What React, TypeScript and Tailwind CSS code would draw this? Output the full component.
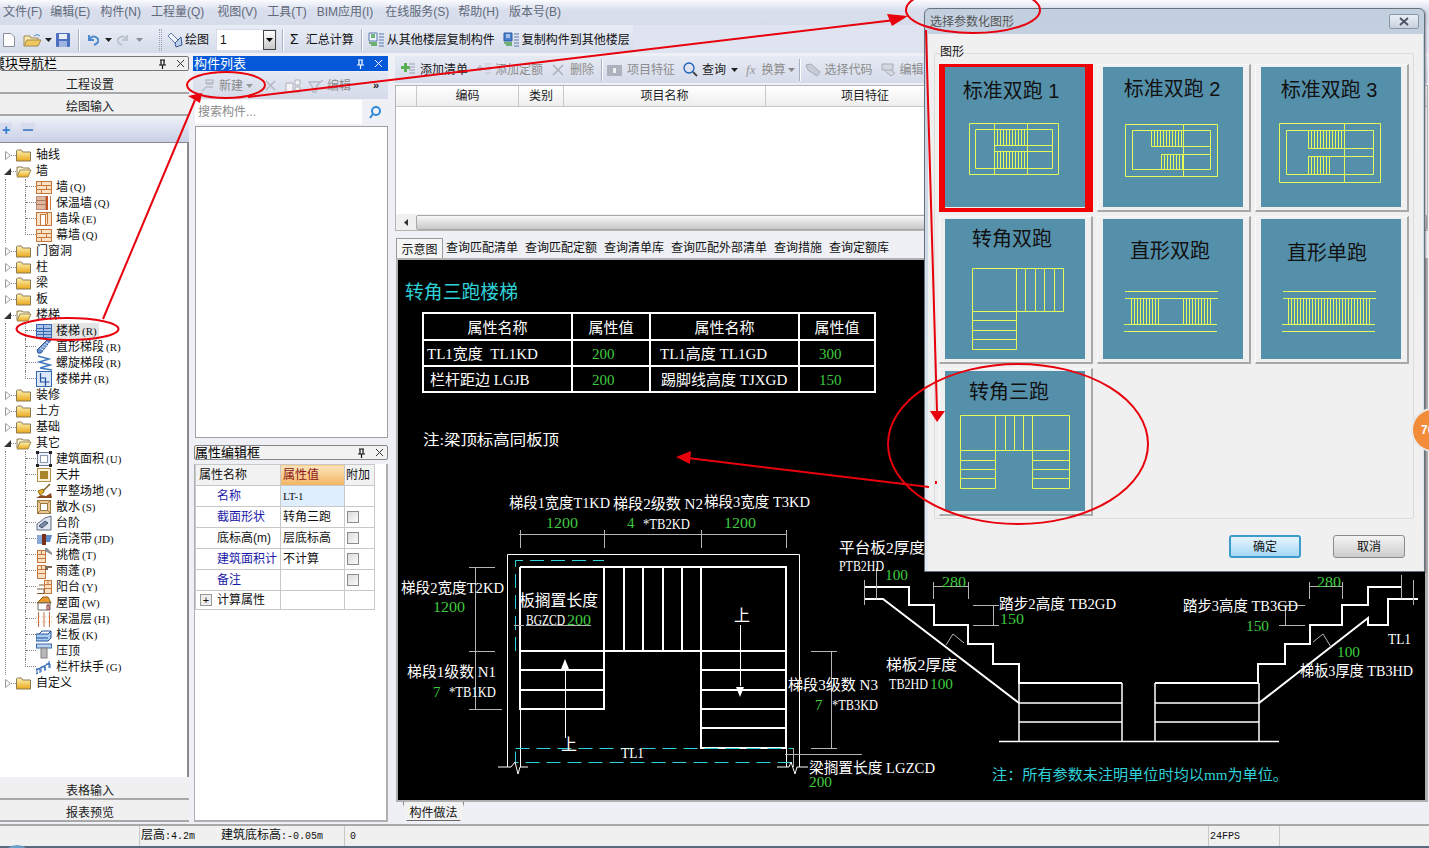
import type { ReactNode } from "react";

const SERIF = "[font-family:'Liberation_Serif','Noto_Sans_CJK_SC',serif]";

const menus = [
  { label: "文件(F)", cls: "mr-[-2px]" },
  { label: "编辑(E)", cls: "" },
  { label: "构件(N)", cls: "" },
  { label: "工程量(Q)", cls: "pr-[3px]" },
  { label: "视图(V)", cls: "" },
  { label: "工具(T)", cls: "" },
  { label: "BIM应用(I)", cls: "pr-[2px]" },
  { label: "在线服务(S)", cls: "mr-[-1px]" },
  { label: "帮助(H)", cls: "" },
  { label: "版本号(B)", cls: "" },
];

type Leaf = { icon: string; name: string; code?: string; active?: boolean };
type Node = { name: string; children?: Leaf[] };

const tree: Node[] = [
  { name: "轴线" },
  {
    name: "墙",
    children: [
      { icon: "brick", name: "墙", code: "Q" },
      { icon: "insul", name: "保温墙", code: "Q" },
      { icon: "pier", name: "墙垛", code: "E" },
      { icon: "brick", name: "幕墙", code: "Q" },
    ],
  },
  { name: "门窗洞" },
  { name: "柱" },
  { name: "梁" },
  { name: "板" },
  {
    name: "楼梯",
    children: [
      { icon: "stair", name: "楼梯", code: "R", active: true },
      { icon: "flight", name: "直形梯段", code: "R" },
      { icon: "spiral", name: "螺旋梯段", code: "R" },
      { icon: "well", name: "楼梯井", code: "R" },
    ],
  },
  { name: "装修" },
  { name: "土方" },
  { name: "基础" },
  {
    name: "其它",
    children: [
      { icon: "area", name: "建筑面积", code: "U" },
      { icon: "patio", name: "天井" },
      { icon: "site", name: "平整场地", code: "V" },
      { icon: "apron", name: "散水", code: "S" },
      { icon: "step", name: "台阶" },
      { icon: "strip", name: "后浇带", code: "JD" },
      { icon: "eave", name: "挑檐", code: "T" },
      { icon: "canopy", name: "雨蓬", code: "P" },
      { icon: "balcony", name: "阳台", code: "Y" },
      { icon: "roof", name: "屋面", code: "W" },
      { icon: "layer", name: "保温层", code: "H" },
      { icon: "parapet", name: "栏板", code: "K" },
      { icon: "coping", name: "压顶" },
      { icon: "rail", name: "栏杆扶手", code: "G" },
    ],
  },
  { name: "自定义" },
];

function Svg({ w = 16, h = 16, vb, children }: { w?: number; h?: number; vb?: string; children: ReactNode }) {
  return (
    <svg width={w} height={h} viewBox={vb ?? `0 0 ${w} ${h}`} className="shrink-0" fill="none">
      {children}
    </svg>
  );
}

function LeafIcon({ kind }: { kind: string }) {
  const brick = "#c8763a";
  const blue = "#3a68b0";
  switch (kind) {
    case "brick":
      return (
        <Svg>
          <rect x="0.5" y="2.5" width="15" height="12" fill="#fbe2c4" stroke={brick} />
          <path d="M0 6.5h16M0 10.5h16M5.5 2.5v4M10.5 6.5v4M5.5 10.5v4" stroke={brick} />
        </Svg>
      );
    case "insul":
      return (
        <Svg>
          <rect x="0.5" y="1.5" width="9" height="13" fill="#e2b8a0" stroke="#b89080" />
          <rect x="10" y="1" width="2" height="14" fill="#c8501e" />
          <path d="M0 5.5h9M0 9.5h9" stroke="#a87860" />
          <path d="M14.5 1v14" stroke="#c8763a" />
        </Svg>
      );
    case "pier":
      return (
        <Svg>
          <rect x="0.5" y="1.5" width="15" height="13" fill="#fbe2c4" stroke={brick} />
          <rect x="4.5" y="3.5" width="5" height="11" fill="#fff" stroke={brick} />
          <path d="M9.5 3.5l2-2v11l-2 2" stroke={brick} />
        </Svg>
      );
    case "stair":
      return (
        <Svg>
          <rect x="0.5" y="1.5" width="15" height="13" fill="#a9c2ea" stroke={blue} />
          <path d="M0 5.5h16M0 8.5h16M0 11.5h16M7.5 1.5v13" stroke={blue} />
        </Svg>
      );
    case "flight":
      return (
        <Svg>
          <path d="M1 11L11 1h4L5 14H2z" fill="#6c94d0" stroke="#23508f" />
          <path d="M4 9l5 3M6 7l5 3M8 5l4 3M10 3l3 2" stroke="#dfe9f8" />
        </Svg>
      );
    case "spiral":
      return (
        <Svg>
          <path d="M2 1l11 3-10 3 11 3-10 3 12 2" stroke="#3c78c0" strokeWidth="1.4" />
        </Svg>
      );
    case "well":
      return (
        <Svg>
          <rect x="0.5" y="0.5" width="15" height="15" fill="#dbe7f8" stroke={blue} />
          <path d="M4.5 2v9h9M4.5 7h5v7M9.5 11v4" stroke="#1f4f96" strokeWidth="1.2" />
        </Svg>
      );
    case "area":
      return (
        <Svg>
          <rect x="1.5" y="1.5" width="13" height="13" fill="#eef2f8" stroke="#6a7b90" />
          <rect x="4.5" y="4.5" width="7" height="7" fill="#fff" stroke="#8a9ab0" />
          <path d="M0 0h3v3H0zM13 0h3v3h-3zM0 13h3v3H0zM13 13h3v3h-3z" fill="#222" />
        </Svg>
      );
    case "patio":
      return (
        <Svg>
          <rect x="1.5" y="1.5" width="13" height="13" fill="#fbf4dc" stroke="#b89050" />
          <rect x="4" y="4" width="8" height="8" fill="#a8842a" />
        </Svg>
      );
    case "site":
      return (
        <Svg>
          <path d="M14 1L7 8" stroke="#7a5a20" strokeWidth="1.4" />
          <path d="M2 8l5-2 1 3-4 3z" fill="#e8b020" stroke="#8a6a10" />
          <path d="M0 15l5-3 5 1 5-3 1 5z" fill="#8a4a20" />
        </Svg>
      );
    case "apron":
      return (
        <Svg>
          <rect x="1.5" y="1.5" width="13" height="13" fill="#e8c898" stroke="#9c7a40" />
          <rect x="4.5" y="4.5" width="7" height="7" fill="#fff" stroke="#9c7a40" />
          <path d="M1.5 1.5l3 3M14.5 1.5l-3 3M1.5 14.5l3-3M14.5 14.5l-3-3" stroke="#9c7a40" />
        </Svg>
      );
    case "step":
      return (
        <Svg>
          <path d="M1 15V9l8-6 6-2v14z" fill="#dfe6f0" stroke="#5c6a80" />
          <path d="M3 11l6-5 3 2-6 5z" fill="#7a8ca8" stroke="#44536a" />
        </Svg>
      );
    case "strip":
      return (
        <Svg>
          <path d="M1 4h5v9H1z" fill="#8aa8d8" />
          <path d="M6 3h4v11H6z" fill="#7a3018" />
          <path d="M10 4h6l-2 7h-4z" fill="#5c88c8" />
        </Svg>
      );
    case "eave":
      return (
        <Svg>
          <rect x="1.5" y="3.5" width="8" height="12" fill="#fbe2c4" stroke={brick} />
          <path d="M1 7.5h8M1 11.5h8M5.5 3.5v4" stroke={brick} />
          <path d="M9 1h2l5 5v2l-7-4z" fill="#8a9098" />
        </Svg>
      );
    case "canopy":
      return (
        <Svg>
          <rect x="1.5" y="2.5" width="8" height="13" fill="#fbe2c4" stroke={brick} />
          <path d="M1 6.5h8M1 10.5h8M5.5 2.5v4" stroke={brick} />
          <path d="M9 3h7v2H12v2H9z" fill="#7a6a5a" />
        </Svg>
      );
    case "balcony":
      return (
        <Svg>
          <rect x="8.5" y="1.5" width="7" height="13" fill="#fbe2c4" stroke={brick} />
          <path d="M8 5.5h7M8 9.5h7M12 1.5v4" stroke={brick} />
          <path d="M1 10h7v4.5H1M3 6h5" stroke="#7a5a3a" />
        </Svg>
      );
    case "roof":
      return (
        <Svg>
          <path d="M1 8l6-6h5l3 6z" fill="#e89a30" stroke="#8a5a10" />
          <path d="M2 8h12v7H2z" fill="#fff" stroke="#6a6a6a" />
          <path d="M11 15v-5h2v5" stroke="#8a1a1a" />
        </Svg>
      );
    case "layer":
      return (
        <Svg>
          <path d="M2.5 1v15M8 1v15M13.5 1v15" stroke="#c87040" />
          <path d="M0 6h16M0 11h16" stroke="#e8b890" strokeDasharray="1 2" />
        </Svg>
      );
    case "parapet":
      return (
        <Svg>
          <path d="M0 7h12l3-3v7l-3 3H0z" fill="#a8cdf0" stroke="#1f4f96" />
          <path d="M3 7l3-3h9" stroke="#1f4f96" />
          <path d="M0 11h12" stroke="#1f4f96" />
        </Svg>
      );
    case "coping":
      return (
        <Svg>
          <rect x="0.5" y="1" width="15" height="4" fill="#bcd4f0" stroke={blue} />
          <rect x="5" y="5" width="6" height="10" fill="#b8b8b8" stroke="#808080" />
        </Svg>
      );
    default:
      return (
        <Svg>
          <path d="M0 11l14-7M1 15v-5M5 13V8M9 11V6M13 9V2M0 15l2-1" stroke="#2a62b4" />
          <path d="M0 10h4v4M5 8h4v4M10 5h4v4" stroke="#2a62b4" />
        </Svg>
      );
  }
}

function Folder({ open }: { open?: boolean }) {
  return (
    <Svg w={16} h={13}>
      <defs>
        <linearGradient id="folderFill" x1="0" y1="0" x2="0" y2="1">
          <stop offset="0" stopColor="#fff3b8" />
          <stop offset="1" stopColor="#e8a818" />
        </linearGradient>
      </defs>
      {open ? (
        <>
          <path d="M1 11V2h5l1 1h6v2" stroke="#8a7a50" fill="#fdf3d0" />
          <path d="M1 12l3-7h11l-3 7z" fill="url(#folderFill)" stroke="#a08a50" />
        </>
      ) : (
        <>
          <path d="M0.5 12V2l1-1h4l1 2h8v9z" fill="url(#folderFill)" stroke="#8a7a50" />
        </>
      )}
    </Svg>
  );
}

function Pin({ dark = true }: { dark?: boolean }) {
  return (
    <Svg w={9} h={10}>
      <path d="M2 1h5M3 1v5M6 1v5M1 6h7M4.5 6v4" stroke={dark ? "#111" : "#fff"} strokeWidth="1.2" />
    </Svg>
  );
}

function CloseX({ dark = true }: { dark?: boolean }) {
  return (
    <Svg w={9} h={9}>
      <path d="M1 1l7 7M8 1L1 8" stroke={dark ? "#333" : "#fff"} />
    </Svg>
  );
}

function Caret({ color = "#222" }: { color?: string }) {
  return (
    <Svg w={7} h={4}>
      <path d="M0 0h7L3.5 4z" fill={color} />
    </Svg>
  );
}

function Sep() {
  return <div className="mx-[3px] h-[22px] w-[2px] shrink-0 border-r border-l border-r-white border-l-[#a8b0c4]" />;
}

function TreeRows() {
  return (
    <div className="pt-[4px] text-[12px] leading-[16px] text-[#111]">
      {tree.map((node) => (
        <div key={node.name}>
          <div className="flex h-[16px] items-center">
            <div className="flex w-[11px] justify-end">
              {node.children ? (
                <Svg w={7} h={7}>
                  <path d="M7 0v7H0z" fill="#333" />
                </Svg>
              ) : (
                <Svg w={6} h={9}>
                  <path d="M0.5 0.5v8l5-4z" stroke="#9a9a9a" fill="#fff" />
                </Svg>
              )}
            </div>
            <div className="w-[5px] border-b border-dotted border-[#888]" />
            <Folder open={!!node.children} />
            <span className="ml-[4px]">{node.name}</span>
          </div>
          {node.children && (
            <div className="ml-[5px] border-l border-dotted border-[#888] pl-[19px]">
              {node.children.map((leaf, i) => (
                <div key={leaf.name + i} className="flex h-[16px] items-center">
                  <div
                    className={
                      i === node.children!.length - 1
                        ? "mb-[8px] h-[8px] w-[11px] border-b border-l border-dotted border-[#888]"
                        : "relative h-[16px] w-[11px] border-l border-dotted border-[#888]"
                    }
                  >
                    {i !== node.children!.length - 1 && <div className="h-[8px] border-b border-dotted border-[#888]" />}
                  </div>
                  <LeafIcon kind={leaf.icon} />
                  <span
                    className={
                      leaf.active
                        ? "flex h-[16px] items-center rounded-[1px] bg-[#e4e4e4] pr-[2px] pl-[4px]"
                        : "ml-[4px] flex items-center"
                    }
                  >
                    {leaf.name}
                    {leaf.code && <span className={`ml-[2px] text-[11px] ${SERIF}`}>({leaf.code})</span>}
                  </span>
                </div>
              ))}
            </div>
          )}
        </div>
      ))}
    </div>
  );
}

function NavButton({ label }: { label: string }) {
  return (
    <div className="flex h-[21px] shrink-0 items-center justify-center border-b-2 border-[#a8a8a8] bg-[#f0f0f0] pt-[4px] pr-[9px] text-[12px] text-[#222]">
      {label}
    </div>
  );
}

function LeftPanel() {
  return (
    <div className="flex w-[189px] shrink-0 flex-col pb-[2px]">
      <div className="mt-[3px] flex h-[15px] items-center overflow-hidden rounded-[2px] border border-[#777] bg-[#f0f0f0] pr-[3px] text-[13px] text-black">
        <span className="ml-[-9px] flex-1">模块导航栏</span>
        <Pin />
        <span className="w-[9px]" />
        <CloseX />
      </div>
      <div className="mt-[2px]">
        <NavButton label="工程设置" />
      </div>
      <div className="mt-[1px]">
        <NavButton label="绘图输入" />
      </div>
      <div className="mt-[1px] flex h-[26px] shrink-0 items-center gap-[9px] border-b border-[#8a8a8a] bg-linear-to-b from-[#eef0f8] to-[#c9d0e6]">
        <div className="flex h-[14px] w-[12px] items-center justify-center bg-[#d6dcee] text-[14px] font-bold leading-none text-[#2f7fd0]">+</div>
        <div className="flex h-[14px] w-[14px] items-center justify-center bg-[#d6dcee]">
          <div className="h-[2px] w-[10px] bg-[#5a8ac8]" />
        </div>
      </div>
      <div className="min-h-0 flex-1 border-r-2 border-[#8a8a8a] bg-white">
        <TreeRows />
      </div>
      <div className="mt-[2px]">
        <NavButton label="表格输入" />
      </div>
      <div className="mt-[1px]">
        <NavButton label="报表预览" />
      </div>
    </div>
  );
}

const propRows = [
  { name: "名称", blue: true, value: "LT-1", check: false, sel: true },
  { name: "截面形状", blue: true, value: "转角三跑", check: true },
  { name: "底标高(m)", blue: false, value: "层底标高", check: true },
  { name: "建筑面积计", blue: true, value: "不计算", check: true },
  { name: "备注", blue: true, value: "", check: true },
];

function PropTable() {
  return (
    <table className="w-[180px] table-fixed border-collapse text-[12px] text-[#111]">
      <tbody>
        <tr className="h-[21px]">
          <td className="w-[85px] border border-[#c8c8c8] bg-[#f2f2f2] pl-[3px]">属性名称</td>
          <td className="w-[64px] border border-[#c8c8c8] bg-linear-to-b from-[#fce4bc] to-[#f2b45e] pl-[2px] text-[#8a1616]">属性值</td>
          <td className="border border-[#c8c8c8] bg-[#f2f2f2] pl-[1px]">附加</td>
        </tr>
        {propRows.map((r) => (
          <tr key={r.name} className="h-[21px]">
            <td className={r.blue ? "border border-[#c8c8c8] pl-[21px] text-[#1a1aa8]" : "border border-[#c8c8c8] pl-[21px]"}>{r.name}</td>
            <td className={r.sel ? `border border-[#c8c8c8] bg-[#dfeefd] pl-[2px] text-[11px] ${SERIF}` : "border border-[#c8c8c8] pl-[2px]"}>{r.value}</td>
            <td className="border border-[#c8c8c8]">
              {r.check && <div className="ml-[2px] h-[12px] w-[12px] border border-[#8c8c8c] bg-linear-to-br from-[#dcdcdc] to-[#fafafa]" />}
            </td>
          </tr>
        ))}
        <tr className="h-[19px]">
          <td className="border border-[#c8c8c8] pl-[4px]">
            <span className="flex items-center gap-[5px]">
              <span className="flex h-[12px] w-[12px] items-center justify-center border border-[#999] bg-[#eee] text-[11px] leading-none">+</span>
              计算属性
            </span>
          </td>
          <td className="border border-[#c8c8c8]" />
          <td className="border border-[#c8c8c8]" />
        </tr>
      </tbody>
    </table>
  );
}

function MiddlePanel() {
  return (
    <div className="ml-[4px] flex w-[195px] shrink-0 flex-col pb-[2px]">
      <div className="mt-[3px] flex h-[15px] items-center bg-[#0558d8] pr-[5px] text-[13px] text-white">
        <span className="flex-1 pl-[1px]">构件列表</span>
        <Pin dark={false} />
        <span className="w-[9px]" />
        <CloseX dark={false} />
      </div>
      <div className="mt-[1px] flex h-[27px] items-center bg-linear-to-b from-[#e4e8f3] to-[#d4dae9] pl-[7px] text-[12px] text-[#8a8a8a]">
        <Svg w={15} h={15}>
          <path d="M2 13l4-4M6 2h7v3H6zM6 6h7M6 9h7" stroke="#b8bcc6" strokeWidth="1.4" />
        </Svg>
        <span className="ml-[4px]">新建</span>
        <span className="ml-[3px]">
          <Caret color="#999" />
        </span>
        <span className="ml-[12px]">
          <Svg w={11} h={11}>
            <path d="M1 1l9 9M10 1l-9 9" stroke="#b0b4be" strokeWidth="1.3" />
          </Svg>
        </span>
        <span className="ml-[9px]">
          <Svg w={16} h={14}>
            <path d="M1 4h7v9H1zM10 1h5v5h-5zM10 8h5v5h-5z" fill="#f4f4f6" stroke="#aeb2bc" />
          </Svg>
        </span>
        <span className="ml-[7px]">
          <Svg w={16} h={14}>
            <path d="M1 3h11L8 9v4H5V9zM8 7l7-6" stroke="#b4b8c2" strokeWidth="1.3" />
          </Svg>
        </span>
        <span className="ml-[3px]">编辑</span>
        <span className="ml-[22px] text-[11px] font-bold text-[#222]">»</span>
      </div>
      <div className="flex h-[25px] items-center bg-[#eef0f5] pl-[2px]">
        <div className="flex h-[24px] w-[167px] items-center bg-white pl-[3px] text-[12px] text-[#8a8a8a]">搜索构件...</div>
        <span className="ml-[6px]">
          <Svg w={14} h={14}>
            <circle cx="8" cy="6" r="4" stroke="#2f88d8" strokeWidth="2" />
            <path d="M5 9l-3 4" stroke="#2f88d8" strokeWidth="2" />
          </Svg>
        </span>
      </div>
      <div className="mt-[2px] ml-[2px] h-[312px] border border-[#a0a0a0] bg-white" />
      <div className="mt-[7px] ml-[1px] flex h-[15px] items-center rounded-[2px] border border-[#888] bg-[#f2f2f2] pr-[3px] text-[13px] text-black">
        <span className="flex-1">属性编辑框</span>
        <Pin />
        <span className="w-[9px]" />
        <CloseX />
      </div>
      <div className="mt-[4px] ml-[1px] flex-1 border-r-2 border-b-2 border-l border-[#b0b0b0] bg-white">
        <PropTable />
      </div>
    </div>
  );
}

function ToolText({ children, off }: { children: ReactNode; off?: boolean }) {
  return <span className={off ? "text-[#8c8c8c]" : "text-[#1a1a1a]"}>{children}</span>;
}

function RightToolbar() {
  return (
    <div className="mt-[3px] flex h-[27px] items-center bg-linear-to-b from-[#e6eaf4] to-[#d5dbea] pl-[5px] text-[12px] whitespace-nowrap">
      <Svg>
        <path d="M1 4h3V1h3v3h3v3H7v3H4V7H1z" fill="#58b050" />
        <path d="M9 2h6M9 5h6M9 8h6M9 11h6" stroke="#9aa0ac" />
      </Svg>
      <span className="ml-[4px]">
        <ToolText>添加清单</ToolText>
      </span>
      <span className="ml-[8px]">
        <Svg>
          <path d="M1 6h6M4 3v6" stroke="#b8bcc4" strokeWidth="2" />
          <path d="M9 2h6M9 5h6M9 8h6M9 11h6" stroke="#c0c4cc" />
        </Svg>
      </span>
      <span className="ml-[3px]">
        <ToolText off>添加定额</ToolText>
      </span>
      <span className="ml-[9px]">
        <Svg w={12} h={12}>
          <path d="M1 1l10 10M11 1L1 11" stroke="#a8acb6" strokeWidth="1.4" />
        </Svg>
      </span>
      <span className="ml-[6px]">
        <ToolText off>删除</ToolText>
      </span>
      <span className="ml-[4px]">
        <Sep />
      </span>
      <span className="ml-[1px]">
        <Svg w={16} h={14}>
          <rect y="2" width="15" height="11" fill="#aeb2bc" />
          <path d="M6 5h3v5H6z" fill="#eef0f4" />
        </Svg>
      </span>
      <span className="ml-[4px]">
        <ToolText off>项目特征</ToolText>
      </span>
      <span className="ml-[8px]">
        <Svg w={15} h={15}>
          <circle cx="6" cy="6" r="5" stroke="#1a5fb8" strokeWidth="1.3" />
          <path d="M10 10l4 4" stroke="#444" strokeWidth="1.8" />
        </Svg>
      </span>
      <span className="ml-[4px]">
        <ToolText>查询</ToolText>
      </span>
      <span className="ml-[5px]">
        <Caret />
      </span>
      <span className="ml-[8px] text-[13px] text-[#999] italic [font-family:'Liberation_Serif',serif]">fx</span>
      <span className="ml-[6px]">
        <ToolText off>换算</ToolText>
      </span>
      <span className="ml-[3px]">
        <Caret color="#888" />
      </span>
      <span className="ml-[1px]">
        <Sep />
      </span>
      <span className="ml-[1px]">
        <Svg>
          <path d="M1 3l5-1 9 8-3 4-9-6z" fill="#c8ccd4" stroke="#a6aab4" />
        </Svg>
      </span>
      <span className="ml-[3px]">
        <ToolText off>选择代码</ToolText>
      </span>
      <span className="ml-[8px]">
        <Svg>
          <path d="M1 2h11v6H1zM3 8l7 6 4-3-4-3" fill="#d4d8e0" stroke="#a8acb6" />
        </Svg>
      </span>
      <span className="ml-[3px]">
        <ToolText off>编辑</ToolText>
      </span>
    </div>
  );
}

function T({ x, y, w, s = 15, c = "#fff", children }: { x: number; y: number; w?: number; s?: number; c?: string; children: string }) {
  return (
    <text x={x} y={y + 1} fontSize={s} fill={c} dominantBaseline="central" textLength={w} lengthAdjust={w ? "spacingAndGlyphs" : undefined}>
      {children}
    </text>
  );
}

const GREEN = "#3fcb3f";
const CYAN = "#2fd2d8";

function StairDrawing() {
  return (
    <svg width="1027" height="540" viewBox="398 260 1027 540" className={`block ${SERIF}`} fill="none">
      {/* plan: walls */}
      <path d="M507.5 767V554.5H799.5V767" stroke="#fff" />
      <path d="M520.5 709V767M786.5 748V767" stroke="#fff" />
      <g stroke="#fff" strokeWidth="2">
        <path d="M520 567H786V748H701V651H604V709H520V567M520 651H786M604 567V651M701 567V651" />
        <path d="M624 567V651M643 567V651M663 567V651M682 567V651" />
        <path d="M520 670H604M520 690H604M701 670H786M701 690H786M701 709H786M701 728H786" />
      </g>
      <path d="M515.5 651V560.5H604" stroke={CYAN} strokeDasharray="14 7" />
      <path d="M515.5 748.5H793.5V762.5H515.5Z" stroke={CYAN} strokeDasharray="14 7" />
      {/* plan: arrows */}
      <path d="M565.5 668V738M740.5 625V686" stroke="#fff" />
      <path d="M565 659l-4 10h8zM740 697l-4-10h8z" fill="#fff" />
      <path d="M498 767H511L515 762L518 774L520 767H528M777 767H789L791 762L795 774L797 767H808" stroke="#fff" />
      {/* plan: dimensions */}
      <g stroke="#b4b4b4">
        <path d="M519 534.5H787M520.5 530V548M604.5 530V548M701.5 530V548M786.5 530V548" />
        <path d="M475.5 567V709M469 567.5H495M469 651.5H495M469 709.5H502" />
        <path d="M831.5 651V748M811 651.5H837M811 748.5H837" />
        <path d="M785 754.5H862M793.5 748V767" />
        <path d="M526 625.5H591M514 625.5H524" />
      </g>
      {/* section */}
      <g stroke="#fff" strokeWidth="2">
        <path d="M864 587H909V605H934V625H968V644H993V664H1019V683H1122" />
        <path d="M864 599H883L1019 703" />
        <path d="M1155 683H1258V664H1285V644H1310V625H1342V605H1368V587H1401" />
        <path d="M1259 703L1368 618V625H1388V599H1418" />
      </g>
      <g stroke="#fff" strokeWidth="1.5">
        <path d="M1019 683V741M1122 683V741M1019 703H1122M1019 722H1122M1155 683V741M1259 683V741M1155 703H1259M1155 722H1259M999 741.5H1279" />
      </g>
      <g stroke="#b4b4b4">
        <path d="M933 586.5H968M933.5 582V599M968.5 582V599M1309 586.5H1342M1309.5 582V599M1342.5 582V599" />
        <path d="M973 605.5H999M973 625.5H999M993.5 605V625M1279 605.5H1305M1279 625.5H1305M1285.5 605V625" />
        <path d="M946 645L953 634L964 643M1313 642L1323 634L1331 647" />
        <path d="M876.5 568V599M864.5 580V605M1401.5 575V599M1413.5 580V605" />
      </g>
      {/* labels */}
      <T x={405} y={291} s={19} c={CYAN} w={113}>转角三跑楼梯</T>
      <T x={423} y={439} s={15} w={136}>注:梁顶标高同板顶</T>
      <T x={509} y={502} w={101}>梯段1宽度T1KD</T>
      <T x={613} y={503} w={90}>梯段2级数 N2</T>
      <T x={704} y={501} w={106}>梯段3宽度 T3KD</T>
      <T x={546} y={522} c={GREEN} w={32}>1200</T>
      <T x={627} y={522} c={GREEN}>4</T>
      <T x={643} y={523} w={47}>*TB2KD</T>
      <T x={724} y={522} c={GREEN} w={32}>1200</T>
      <T x={401} y={587} w={103}>梯段2宽度T2KD</T>
      <T x={433} y={606} c={GREEN} w={32}>1200</T>
      <T x={519} y={599} s={16} w={79}>板搁置长度</T>
      <T x={526} y={619} w={39}>BGZCD</T>
      <T x={567} y={619} c={GREEN} w={24}>200</T>
      <T x={407} y={671} w={89}>梯段1级数 N1</T>
      <T x={433} y={691} c={GREEN}>7</T>
      <T x={449} y={691} w={47}>*TB1KD</T>
      <T x={788} y={684} w={90}>梯段3级数 N3</T>
      <T x={815} y={704} c={GREEN}>7</T>
      <T x={832} y={704} w={46}>*TB3KD</T>
      <T x={561} y={743} s={16}>上</T>
      <T x={734} y={614} s={16}>上</T>
      <T x={621} y={752} w={23}>TL1</T>
      <T x={809} y={767} w={126}>梁搁置长度 LGZCD</T>
      <T x={809} y={781} c={GREEN} w={23}>200</T>
      <T x={839} y={547} w={86}>平台板2厚度</T>
      <T x={839} y={565} w={45}>PTB2HD</T>
      <T x={885} y={574} c={GREEN} w={23}>100</T>
      <T x={942} y={581} c={GREEN} w={24}>280</T>
      <T x={1317} y={581} c={GREEN} w={24}>280</T>
      <T x={999} y={603} w={117}>踏步2高度 TB2GD</T>
      <T x={1000} y={618} c={GREEN} w={24}>150</T>
      <T x={1183} y={605} w={115}>踏步3高度 TB3GD</T>
      <T x={1246} y={625} c={GREEN} w={23}>150</T>
      <T x={886} y={664} w={71}>梯板2厚度</T>
      <T x={889} y={683} w={39}>TB2HD</T>
      <T x={930} y={683} c={GREEN} w={23}>100</T>
      <T x={1388} y={638} w={23}>TL1</T>
      <T x={1337} y={651} c={GREEN} w={23}>100</T>
      <T x={1300} y={670} w={113}>梯板3厚度 TB3HD</T>
      <T x={992} y={774} c={CYAN} w={296}>注：所有参数未注明单位时均以mm为单位。</T>
    </svg>
  );
}

function CanvasTable() {
  const cell = "border-2 border-white pt-[2px]";
  const num = `${cell} pl-[19px] text-[#3fcb3f]`;
  return (
    <table className={`absolute top-[52px] left-[24px] w-[454px] table-fixed border-collapse text-[15px] leading-[18px] text-white ${SERIF}`}>
      <tbody>
        <tr className="h-[27px]">
          <td className={`${cell} w-[149px] text-center`}>属性名称</td>
          <td className={`${cell} w-[78px] text-center`}>属性值</td>
          <td className={`${cell} w-[149px] text-center`}>属性名称</td>
          <td className={`${cell} text-center`}>属性值</td>
        </tr>
        <tr className="h-[26px]">
          <td className={`${cell} pl-[3px] whitespace-nowrap`}>TL1宽度&nbsp;&nbsp;TL1KD</td>
          <td className={num}>200</td>
          <td className={`${cell} pl-[9px] whitespace-nowrap`}>TL1高度 TL1GD</td>
          <td className={num}>300</td>
        </tr>
        <tr className="h-[26px]">
          <td className={`${cell} pl-[6px] whitespace-nowrap`}>栏杆距边 LGJB</td>
          <td className={num}>200</td>
          <td className={`${cell} pl-[10px] whitespace-nowrap`}>踢脚线高度 TJXGD</td>
          <td className={num}>150</td>
        </tr>
      </tbody>
    </table>
  );
}

function RightPanel() {
  const tabs = ["查询匹配清单", "查询匹配定额", "查询清单库", "查询匹配外部清单", "查询措施", "查询定额库"];
  return (
    <div className="ml-[7px] flex min-w-0 flex-1 flex-col pr-[1px]">
      <RightToolbar />
      <div className="mt-[2px] flex h-[146px] flex-col border border-[#b4b4b4] bg-white">
        <div className="flex h-[21px] shrink-0 border-b border-[#c8c8c8] bg-linear-to-b from-white to-[#eeeeee] text-[12px] text-[#222]">
          <div className="w-[21px] border-r border-[#c8c8c8]" />
          <div className="flex w-[102px] items-center justify-center border-r border-[#c8c8c8]">编码</div>
          <div className="flex w-[45px] items-center justify-center border-r border-[#c8c8c8]">类别</div>
          <div className="flex w-[202px] items-center justify-center border-r border-[#c8c8c8]">项目名称</div>
          <div className="flex w-[198px] items-center justify-center">项目特征</div>
        </div>
        <div className="flex-1" />
        <div className="flex h-[16px] shrink-0 items-center bg-[#f0f0f0]">
          <div className="flex w-[20px] justify-center">
            <Svg w={4} h={7}>
              <path d="M4 0v7L0 3.5z" fill="#333" />
            </Svg>
          </div>
          <div className="flex h-[15px] flex-1 items-center justify-center rounded-[2px] border border-[#a8a8a8] bg-linear-to-b from-[#f8f8f8] to-[#c8c8c8] pr-[10px] text-[9px] leading-none text-[#666]">
            <span className="ml-[150px]">|||</span>
          </div>
        </div>
      </div>
      <div className="mt-[7px] flex h-[20px] items-center pl-[1px] text-[12px] text-[#111]">
        <div className="flex h-[20px] w-[47px] items-center justify-center border border-b-0 border-[#9a9a9a] bg-[#f5f5f5] pt-[3px]">示意图</div>
        <div className="ml-[3px] flex items-center gap-[7px]">
          {tabs.map((t) => (
            <span key={t}>{t}</span>
          ))}
        </div>
      </div>
      <div className="relative ml-[1px] border-2 border-r-[3px] border-[#b0b0b0] bg-black">
        <StairDrawing />
        <CanvasTable />
      </div>
      <div className="flex h-[22px] items-start pl-[8px]">
        <div className="flex h-[19px] w-[61px] items-center justify-center border-x border-b border-[#666] bg-[#f2f2f2] pt-[3px] text-[12px] text-[#111] [clip-path:polygon(0_0,100%_0,94%_100%,6%_100%)]">
          构件做法
        </div>
      </div>
    </div>
  );
}

type Thumb = { title: string; pad: string; lines: ReactNode };

function Hatch({ x1, x2, y1, y2, step = 3 }: { x1: number; x2: number; y1: number; y2: number; step?: number }) {
  const xs: number[] = [];
  for (let x = x1; x <= x2; x += step) xs.push(x);
  return <path d={xs.map((x) => `M${x + 0.5} ${y1}V${y2}`).join("")} />;
}

const thumbs: Thumb[] = [
  {
    title: "标准双跑 1",
    pad: "pt-[12px] pr-[8px]",
    lines: (
      <>
        <path d="M24.5 56.5H113.5V107.5H24.5ZM30.5 62.5H107.5V101.5H30.5ZM49.5 56V108M82.5 56V108M49.5 78.5H107M49.5 84.5H107" />
        <Hatch x1={49} x2={82} y1={62} y2={78} />
        <Hatch x1={49} x2={82} y1={85} y2={101} />
      </>
    ),
  },
  {
    title: "标准双跑 2",
    pad: "pt-[10px] pr-[2px]",
    lines: (
      <>
        <path d="M22.5 57.5H114.5V109.5H22.5ZM29.5 63.5H107.5V102.5H29.5ZM80.5 57V110M48.5 63V79.5H107M58.5 102V87.5H107" />
        <Hatch x1={48} x2={80} y1={63} y2={79} />
        <Hatch x1={58} x2={80} y1={87} y2={102} />
      </>
    ),
  },
  {
    title: "标准双跑 3",
    pad: "pt-[11px] pr-[4px]",
    lines: (
      <>
        <path d="M18.5 56.5H119.5V115.5H18.5ZM25.5 63.5H112.5V107.5H25.5ZM83.5 56V116M47.5 63V81.5H112M47.5 107V89.5H112" />
        <Hatch x1={47} x2={83} y1={63} y2={81} />
        <Hatch x1={47} x2={70} y1={89} y2={107} />
      </>
    ),
  },
  {
    title: "转角双跑",
    pad: "pt-[8px] pr-[6px]",
    lines: (
      <path d="M27.5 49.5H118.5V92.5H27.5ZM27.5 92V130.5H71.5V49M80.5 49V92M90.5 49V92M99.5 49V92M109.5 49V92M27 101.5H71M27 111.5H71M27 120.5H71" />
    ),
  },
  {
    title: "直形双跑",
    pad: "pt-[20px] pr-[6px]",
    lines: (
      <>
        <path d="M22 72.5H115M22 79.5H115M21 105.5H114M21 112.5H114" />
        <Hatch x1={28} x2={55} y1={79} y2={105} />
        <Hatch x1={80} x2={108} y1={79} y2={105} />
      </>
    ),
  },
  {
    title: "直形单跑",
    pad: "pt-[22px] pr-[8px]",
    lines: (
      <>
        <path d="M22 72.5H115M22 79.5H115M21 105.5H114M21 112.5H114" />
        <Hatch x1={27} x2={109} y1={79} y2={105} />
      </>
    ),
  },
  {
    title: "转角三跑",
    pad: "pt-[9px] pr-[12px]",
    lines: (
      <path d="M15.5 44.5H124.5V79.5H15.5ZM50.5 44V117.5H15.5V79M87.5 44V117.5H124.5V79M60.5 44V79M69.5 44V79M78.5 44V79M15 89.5H50M15 98.5H50M15 107.5H50M87 89.5H124M87 98.5H124M87 107.5H124" />
    ),
  },
];

function ThumbCell({ thumb, selected }: { thumb: Thumb; selected?: boolean }) {
  return (
    <div
      className={
        selected
          ? "h-[148px] w-[154px] border-t-[3px] border-r-[8px] border-b-[4px] border-l-[6px] border-[#f00000]"
          : "h-[148px] w-[154px] border-t border-r-2 border-b-2 border-l border-t-[#f8f8f8] border-r-[#a8a8a8] border-b-[#a8a8a8] border-l-[#f8f8f8] pt-[2px] pl-[5px]"
      }
    >
      <div className={`relative h-[140px] w-[140px] bg-[#5590ab] text-center text-[20px] leading-[24px] text-[#111] ${thumb.pad}`}>
        {thumb.title}
        <svg width="140" height="140" viewBox="0 0 140 140" className="absolute top-0 left-0" fill="none" stroke="#e4fb5a">
          {thumb.lines}
        </svg>
      </div>
    </div>
  );
}

function ParamDialog() {
  return (
    <div className="absolute top-[8px] left-[924px] flex h-[564px] w-[501px] flex-col rounded-t-[6px] border border-[#68727e] bg-linear-to-b from-[#c2cfdf] to-[#e4ebf3] shadow-[1px_1px_2px_rgba(0,0,0,0.35)]">
      <div className="flex h-[25px] shrink-0 items-center justify-between pr-[5px] pl-[5px] text-[12px] text-[#555]">
        <span>选择参数化图形</span>
        <div className="flex h-[15px] w-[30px] items-center justify-center rounded-[2px] border border-[#8a96a6] bg-linear-to-b from-[#e8eef5] to-[#c8d2de]">
          <Svg w={10} h={9}>
            <path d="M1 1l8 7M9 1L1 8" stroke="#4a5260" strokeWidth="1.8" />
          </Svg>
        </div>
      </div>
      <div className="mr-[1px] ml-[3px] flex-1 bg-[#f0f0f0] pt-[19px] pl-[6px]">
        <div className="relative h-[466px] w-[480px] rounded-[2px] border border-[#dcdcdc] pt-[10px] pl-[4px]">
          <span className="absolute top-[-9px] left-[5px] bg-[#f0f0f0] text-[12px] leading-[14px] text-[#111]">图形</span>
          <div className="grid w-[470px] grid-cols-[154px_154px_154px] gap-x-[4px] gap-y-[4px]">
            {thumbs.map((t, i) => (
              <ThumbCell key={t.title} thumb={t} selected={i === 0} />
            ))}
          </div>
        </div>
        <div className="mt-[16px] flex w-[471px] justify-end gap-[32px] text-[12px] text-[#111]">
          <button className="h-[23px] w-[72px] rounded-[3px] border-2 border-[#3c9ccc] bg-linear-to-b from-[#e6f4fd] to-[#a6d8f4]">确定</button>
          <button className="h-[23px] w-[72px] rounded-[3px] border border-[#8a8a8a] bg-linear-to-b from-[#f4f4f4] to-[#cccccc]">取消</button>
        </div>
      </div>
    </div>
  );
}

function Annotations() {
  return (
    <svg width="1429" height="848" viewBox="0 0 1429 848" className="pointer-events-none absolute top-0 left-0" fill="none" stroke="#e8000c" strokeWidth="2">
      <ellipse cx="226" cy="85" rx="39" ry="13" />
      <ellipse cx="67.5" cy="329" rx="51" ry="11" />
      <ellipse cx="973" cy="10" rx="67" ry="23" />
      <ellipse cx="1018" cy="444" rx="130" ry="80" />
      <path d="M103 319L195 100M248 97L895 20M926 30L937 412M929 487L688 458M936 481V484" />
      <g fill="#e8000c" stroke="none">
        <path d="M188 96L202 93L200 103Z" />
        <path d="M908 16L887 14L892 26Z" />
        <path d="M937 422L930 411H945Z" />
        <path d="M676 457L691 451L690 464Z" />
      </g>
    </svg>
  );
}

export default function App() {
  return (
    <div className="relative flex h-[848px] w-[1429px] flex-col overflow-hidden bg-[#eef0f5] [font-family:'Liberation_Sans','Noto_Sans_CJK_SC',sans-serif]">
      <div className="flex h-[25px] shrink-0 items-start gap-[10px] bg-linear-to-b from-[#fafbfe] from-0% via-[#d9dfed] via-40% to-[#d6dcea] pt-[5px] pl-[3px] text-[12px] leading-[14px] text-[#626a7a]">
        {menus.map((m) => (
          <span key={m.label} className={m.cls}>
            {m.label}
          </span>
        ))}
      </div>
      <div className="flex h-[28px] shrink-0 bg-[#dfe4f0]">
        <div className="flex w-[633px] items-center bg-linear-to-b from-[#e9edf6] to-[#d5dbea] pt-[1px] pl-[3px] text-[12px] whitespace-nowrap text-[#111]">
          <Svg w={12} h={14}>
            <path d="M0.5 0.5H8L11.5 4V13.5H0.5Z" fill="#fff" stroke="#8a8f9c" />
          </Svg>
          <span className="ml-[8px]">
            <Svg w={19} h={14}>
              <path d="M1 13V3h6l1 2h7v2" fill="#f8e8b0" stroke="#a08a50" />
              <path d="M1 13l3-6h14l-3 6z" fill="#f0c860" stroke="#a08a50" />
              <path d="M11 3q3-3 6 0" stroke="#4a90d0" />
            </Svg>
          </span>
          <span className="ml-[3px]">
            <Caret />
          </span>
          <span className="ml-[4px]">
            <Svg w={14} h={14}>
              <rect width="14" height="14" rx="1" fill="#4d6fc0" />
              <rect x="3" y="1" width="8" height="5" fill="#e8eefa" />
              <rect x="3" y="8" width="8" height="6" fill="#9db4e0" />
            </Svg>
          </span>
          <span className="ml-[5px]">
            <Sep />
          </span>
          <span className="ml-[3px]">
            <Svg w={13} h={13}>
              <path d="M3 2v5h5M3 7q4-6 8-2t-3 7" stroke="#4d8ad0" strokeWidth="2" />
            </Svg>
          </span>
          <span className="ml-[6px]">
            <Caret />
          </span>
          <span className="ml-[5px]">
            <Svg w={13} h={13}>
              <path d="M10 2v5H5M10 7Q6 1 2 5t3 7" stroke="#bcc4d0" strokeWidth="2" />
            </Svg>
          </span>
          <span className="ml-[6px]">
            <Caret color="#8a8f9c" />
          </span>
          <div className="ml-[16px] h-[22px] w-[3px] border-x border-dotted border-[#9aa2b4]" />
          <span className="ml-[5px]">
            <Svg>
              <path d="M4 1l7 7-3 3-7-7z" fill="#f2f4f8" stroke="#5a7ab0" />
              <path d="M8 11l6-6 1 8-6 2z" fill="#bcd0ea" stroke="#3a5a90" />
            </Svg>
          </span>
          <span className="ml-[2px]">绘图</span>
          <div className="ml-[7px] flex h-[22px] w-[61px] items-center justify-between border border-[#d8dce6] bg-white pl-[3px] text-[#111]">
            1
            <div className="flex h-[20px] w-[13px] items-center justify-center border border-[#444] bg-linear-to-b from-white to-[#c8c8c8]">
              <Caret color="#000" />
            </div>
          </div>
          <span className="ml-[2px]">
            <Sep />
          </span>
          <span className="ml-[3px] text-[14px]">Σ</span>
          <span className="ml-[7px]">汇总计算</span>
          <span className="ml-[4px]">
            <Sep />
          </span>
          <span className="ml-[2px]">
            <Svg>
              <path d="M1 1h8v8H1z" fill="#eef2fa" stroke="#5a7ab0" />
              <path d="M3 3h4M3 5h4M1 11h8M3 13h6" stroke="#48a048" strokeWidth="1.3" />
              <path d="M11 2h5M11 5h5M11 8h5M11 11h5M11 14h5" stroke="#5a7ab0" />
            </Svg>
          </span>
          <span className="ml-[3px]">从其他楼层复制构件</span>
          <span className="ml-[8px]">
            <Svg>
              <path d="M1 1h8v8H1z" fill="#4a80d0" stroke="#2a5aa0" />
              <path d="M3 3h4M3 5h4" stroke="#fff" />
              <path d="M1 11h8M3 13h6" stroke="#48a048" strokeWidth="1.3" />
              <path d="M11 2h5M11 5h5M11 8h5M11 11h5M11 14h5" stroke="#5a7ab0" />
            </Svg>
          </span>
          <span className="ml-[3px]">复制构件到其他楼层</span>
        </div>
      </div>
      <div className="flex min-h-0 flex-1">
        <LeftPanel />
        <MiddlePanel />
        <RightPanel />
      </div>
      <div className="relative flex h-[24px] shrink-0 border-t-2 border-[#a8a8a8] bg-[#f0f0f0] pb-[2px] text-[12px] text-[#111] [font-family:'Liberation_Mono','Noto_Sans_CJK_SC',monospace]">
        <div className="w-[140px] border-r border-[#c8c8c8]" />
        <div className="flex w-[76px] items-center pl-[1px]">
          层高<span className="text-[10px]">:4.2m</span>
        </div>
        <div className="flex w-[129px] items-center border-r border-[#c8c8c8] pl-[5px]">
          建筑底标高<span className="text-[10px]">:-0.05m</span>
        </div>
        <div className="flex w-[864px] items-center border-r border-[#c8c8c8] pl-[5px] text-[10px]">0</div>
        <div className="flex w-[71px] items-center border-r border-[#c8c8c8] pl-[1px] text-[10px]">24FPS</div>
        <div className="absolute bottom-0 left-0 h-[2px] w-full bg-[#5a6a7c]" />
        <div className="absolute top-[19px] left-[2px] h-[30px] w-[30px] rounded-full bg-[#6aa0c8]" />
      </div>
      <ParamDialog />
      <div className="absolute top-[408px] left-[1411px] flex h-[44px] w-[44px] items-center rounded-full border-2 border-[#e8e8e8] bg-[#f28c38] pl-[8px] text-[12px] font-bold text-white">
        76
      </div>
      <Annotations />
    </div>
  );
}
